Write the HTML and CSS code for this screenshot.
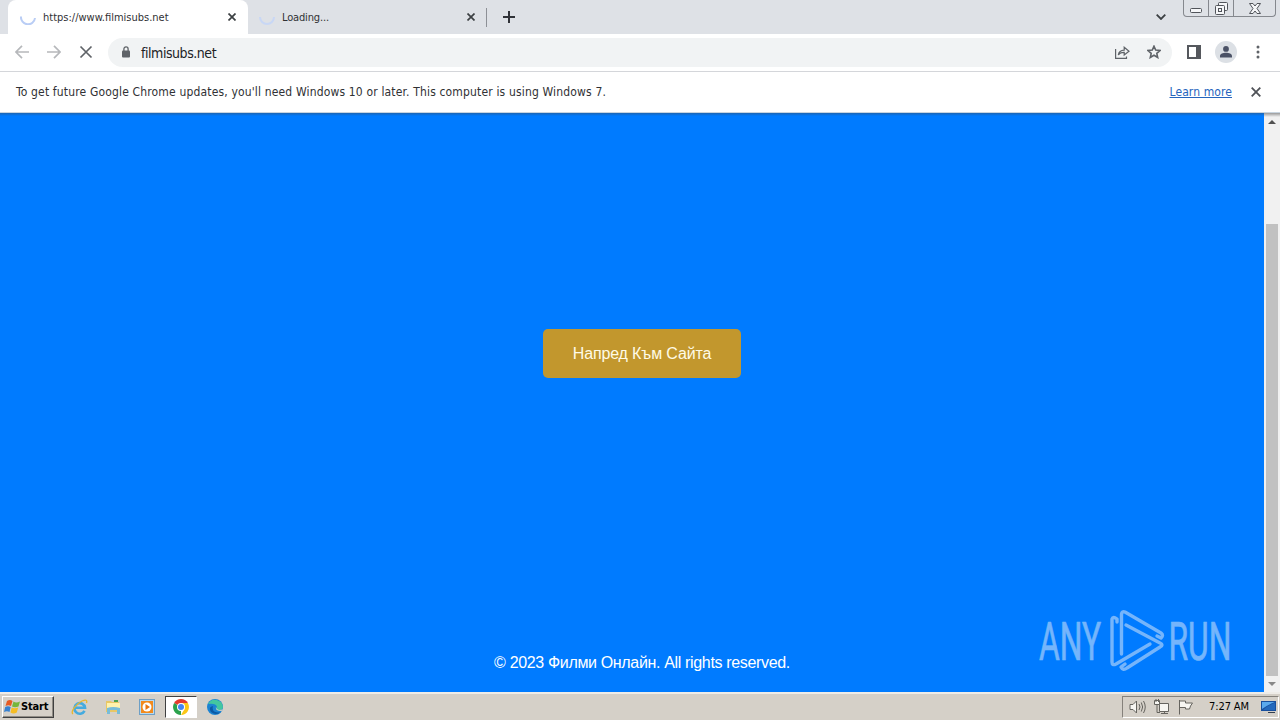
FILE: index.html
```
<!DOCTYPE html>
<html lang="en">
<head>
    <meta charset="UTF-8">
    <title>filmisubs.net</title>
    <link rel="stylesheet" href="styles.css">
</head>
<body>
    <div class="screen">
        <div class="tab-strip">
            <div class="tab active">
                <svg class="spinner" width="16" height="16" viewBox="0 0 16 16"><path d="M1 7.500A7 7 0 0 0 15 9"/></svg>
                <span class="tab-title first-title">https://www.filmisubs.net</span>
                <svg class="tab-close" width="8" height="8" viewBox="0 0 8 8"><path d="M.5 .5l7 7M7.500 .5l-7 7"/></svg>
            </div>
            <div class="tab">
                <svg class="spinner pale" width="16" height="16" viewBox="0 0 16 16"><path d="M1 8A7 7 0 0 0 15 8"/></svg>
                <span class="tab-title">Loading...</span>
                <svg class="tab-close" width="8" height="8" viewBox="0 0 8 8"><path d="M.5 .5l7 7M7.500 .5l-7 7"/></svg>
            </div>
            <span class="tab-divider"></span>
            <svg class="new-tab" width="12" height="12" viewBox="0 0 12 12"><path d="M6 0v12M0 6h12"/></svg>
            <svg class="tab-search" width="10" height="6" viewBox="0 0 10 6"><path d="M.7 .7L5 5L9.300 .7"/></svg>
            <div class="window-buttons">
                <span class="win-btn min"><svg width="12" height="5" viewBox="0 0 12 5"><rect x=".5" y=".5" width="11" height="4" rx="1"/></svg></span>
                <span class="win-btn max"><svg width="13" height="13" viewBox="0 0 13 13"><path d="M3.500 3.500V1.500Q3.500 .5 4.500 .5H11.500Q12.500 .5 12.500 1.500V7.500Q12.500 8.500 11.500 8.500H9.500"/><rect x=".5" y="3.500" width="9" height="9" rx="1"/><rect x="3.500" y="6.500" width="3" height="3"/></svg></span>
                <span class="win-btn close"><svg width="12" height="11" viewBox="0 0 12 11"><path d="M.5 .5H4L6 3L8 .5H11.500L8 5.500L11.500 10.500H8L6 8L4 10.500H.5L4 5.500Z"/></svg></span>
            </div>
        </div>

        <div class="toolbar">
            <svg class="nav-icon disabled" width="14" height="14" viewBox="0 0 14 14"><path d="M14 7H1M7 .8L.9 7L7 13.200"/></svg>
            <svg class="nav-icon disabled" width="14" height="14" viewBox="0 0 14 14"><path d="M0 7H13M7 .8L13.100 7L7 13.200"/></svg>
            <svg class="nav-icon" width="14" height="14" viewBox="0 0 14 14"><path d="M1.500 1.500l11 11M12.500 1.500l-11 11"/></svg>
            <div class="omnibox">
                <svg class="lock" width="8" height="12" viewBox="0 0 8 12"><rect y="4.500" width="8" height="7" rx="1"/><path d="M1.900 5V3a2.100 2.100 0 0 1 4.200 0V5"/></svg>
                <span class="url">filmisubs.net</span>
                <svg class="share" width="15" height="13" viewBox="0 0 15 13"><path d="M.6 3V12.400H11.500V10.500M3.300 9C3.800 5.800 6 4.200 9.200 4.100V1.200L14 5.200L9.200 9V6.400C6.500 6.300 4.700 7 3.300 9Z"/></svg>
                <svg class="star" width="14" height="14" viewBox="0 0 14 14"><path d="M7 1.200L8.700 5.100L13 5.500L9.800 8.300L10.700 12.500L7 10.300L3.300 12.500L4.200 8.300L1 5.500L5.300 5.100Z"/></svg>
            </div>
            <svg class="side-panel" width="14" height="14" viewBox="0 0 14 14"><path d="M0 0H14V14H0ZM2 2V12H9V2Z"/></svg>
            <svg class="avatar" width="22" height="22" viewBox="0 0 22 22"><circle cx="11" cy="11" r="11"/><path d="M11 5a2.900 2.900 0 0 1 0 5.800a2.900 2.900 0 0 1 0-5.800M5 16.500V15c0-2.200 3-3.300 6-3.300s6 1.100 6 3.300v1.500z"/></svg>
            <svg class="menu-dots" width="4" height="14" viewBox="0 0 4 14"><circle cx="2" cy="2" r="1.500"/><circle cx="2" cy="7" r="1.500"/><circle cx="2" cy="12" r="1.500"/></svg>
        </div>

        <div class="infobar">
            <span class="message">To get future Google Chrome updates, you'll need Windows 10 or later. This computer is using Windows 7.</span>
            <a class="learn-more">Learn more</a>
            <svg class="dismiss" width="10" height="10" viewBox="0 0 10 10"><path d="M.7 .7l8.600 8.600M9.300 .7L.7 9.300"/></svg>
        </div>

        <div class="viewport">
            <main class="page">
                <button class="enter">Напред Към Сайта</button>
                <footer>© 2023 Филми Онлайн. All rights reserved.</footer>
                <svg class="watermark" width="210" height="76" viewBox="1030 600 210 76">
                    <text transform="translate(1039 660) scale(.6 1)">ANY</text>
                    <text transform="translate(1168.500 660) scale(.6 1)">RUN</text>
                    <path d="M1117 622V619Q1113 616 1112 619V662Q1112 666 1116 664L1150 644M1121.500 654V614Q1122 611 1125 612L1161 633Q1164 635 1161 638L1157 636M1126 625L1160 643Q1164 645 1160 647L1127 668Q1123 671 1121 667L1125 664"/>
                </svg>
            </main>
            <div class="scrollbar">
                <span class="arrow up"></span>
                <span class="thumb"></span>
                <span class="arrow down"></span>
            </div>
        </div>

        <div class="taskbar">
            <div class="start">
                <svg width="17" height="16" viewBox="0 0 17 16">
                    <path fill="#e65a22" d="M3 2Q6 0 8.500 2L7 7Q4.500 5.500 1.500 7Z"/>
                    <path fill="#75b63b" d="M9.500 2.500Q12 4.500 16 2.500L14.500 7.500Q11 9 8 7.500Z"/>
                    <path fill="#3781d0" d="M1.200 8Q4 6.500 6.700 8L5.500 13Q3 11.500 0 13Z"/>
                    <path fill="#f5bd25" d="M7.700 8.500Q10.500 10 14.200 8.500L12.800 13.500Q9.500 15.500 6.500 13.500Z"/>
                </svg>
                <span>Start</span>
            </div>
            <div class="task">
                <svg width="17" height="17" viewBox="0 0 17 17"><path fill="none" stroke="#45abdf" stroke-width="2.600" d="M13.500 11.800A5.300 5.300 0 1 1 14 8.700H4"/><path fill="none" stroke="#e9b62c" stroke-width="1.300" d="M2 15C-1 13 5 5 11 2Q17-.5 15.500 4"/></svg>
            </div>
            <div class="task">
                <svg width="16" height="16" viewBox="0 0 16 16"><path fill="#e8c765" d="M1 2H6L7 3H14V13H1Z"/><path fill="#fff2ad" d="M2 4H15V10H2Z"/><path fill="#78bcd8" d="M2 9Q8 7 15 9V15H12V11H5V15H2Z"/><path fill="#4aa250" d="M9 1h4v2H9z"/></svg>
            </div>
            <div class="task">
                <svg width="16" height="16" viewBox="0 0 16 16"><rect x=".5" y=".5" width="15" height="15" fill="#b9daf0" stroke="#6d9fc6"/><rect x="2" y="2" width="12" height="12" fill="#f28a1d"/><circle cx="8" cy="8" r="4.500" fill="#fff"/><path fill="#e87510" d="M6.500 5L11 8L6.500 11Z"/></svg>
            </div>
            <div class="task pressed">
                <svg width="16" height="16" viewBox="0 0 16 16"><path fill="#e33b2e" d="M8 8L1.100 4A8 8 0 0 1 14.900 4Z"/><path fill="#2ba24c" d="M8 8V16A8 8 0 0 1 1.100 4Z"/><path fill="#fbc716" d="M8 4H14.900A8 8 0 0 1 8 16L11.500 10Z"/><circle cx="8" cy="8" r="4" fill="#fff"/><circle cx="8" cy="8" r="3" fill="#4285f4"/></svg>
            </div>
            <div class="task">
                <svg width="16" height="16" viewBox="0 0 16 16"><circle cx="8" cy="8" r="8" fill="#1b83d2"/><path fill="#43c6a0" d="M1 5A8 8 0 0 1 16 8Q15 12 10 11Q9 10 10 8Q9 4 1 5Z"/><path fill="#0c59a4" d="M6 7Q4 14 13.500 13.500A8 8 0 0 1 4 13Q1 8 6 7Z"/><path fill="#d6d2ca" d="M9 8Q8 12 14.500 12L16.500 10Q11 12 9.500 9.500Z"/></svg>
            </div>
            <div class="tray">
                <svg class="tray-icon" width="17" height="16" viewBox="0 0 17 16"><path class="speaker" d="M1 5.500H4L7.500 2V14L4 10.500H1Z"/><path d="M10 5Q12 8 10 11M12.300 3.500Q15 8 12.300 12.500M14.500 2Q18 8 14.500 14"/></svg>
                <svg class="tray-icon" width="16" height="16" viewBox="0 0 16 16"><path class="lit" d="M5.500 4.500H14.500V12.500H5.500Z"/><path d="M7 14.500H14M10.500 12.500V14.500"/><path class="lit" d="M.5 1.500H5.500V5.500H.5ZM2 0V3M4.500 0V3"/><path d="M3 5.500V13.500H6"/></svg>
                <svg class="tray-icon" width="16" height="16" viewBox="0 0 16 16"><path class="lit" d="M1.500 1V15.500M1.500 2H7.500V4H14.500L12.500 7L11.500 10H7.500V8.500H1.500"/></svg>
                <span class="clock">7:27 AM</span>
                <svg class="desktop" width="16" height="14" viewBox="0 0 16 14"><path fill="#184f9d" d="M0 1H15V11H0Z"/><path fill="#5aa9ed" d="M1 2H14Q8 4 1 9Z"/><path fill="#2369bd" d="M14 3V10H2Q7 5 14 3Z"/><path fill="#333f50" d="M7 12H14V13H7Z"/></svg>
            </div>
        </div>
    </div>
</body>
</html>
```
FILE: styles.css
```
:root {
    --frame: #dee1e6;
    --icon: #5f6368;
    --page-blue: #007bff;
    --taskbar: #d5d0c8;
}
* { box-sizing: border-box; }
body {
    margin: 0;
    overflow: hidden;
    font-family: "DejaVu Sans Condensed", "DejaVu Sans", Tahoma, sans-serif;
    font-stretch: condensed;
    font-size: 11px;
    color: #303134;
}
svg { display: block; flex-shrink: 0; fill: none; }
.screen { width: 1280px; height: 720px; display: flex; flex-direction: column; }

/* tabs */
.tab-strip { height: 34px; display: flex; align-items: center; background: var(--frame); padding-left: 8px; flex-shrink: 0; }
.tab { width: 238px; height: 34px; display: flex; align-items: center; padding: 0 11px; }
.tab.active { width: 240px; padding: 0 12px; background: #fff; border-radius: 8px 8px 0 0; }
.spinner { stroke: #b9cdf5; stroke-width: 2; margin-right: 7px; }
.spinner.pale { stroke: #c8d7f5; }
.tab-title { letter-spacing: -.15px; white-space: nowrap; }
.first-title { letter-spacing: 0; }
.tab-close { margin-left: auto; stroke: #3c4043; stroke-width: 1.7; }
.tab-divider { width: 1px; height: 19px; background: #8d9096; }
.new-tab { margin-left: 16px; stroke: #303238; stroke-width: 2; }
.tab-search { margin-left: auto; stroke: #3c4043; stroke-width: 1.8; }
.window-buttons {
    display: flex; align-self: flex-start; width: 93px; height: 17px; margin: 0 4px 0 17px;
    border: 1px solid #85888e; border-top: 0; border-radius: 0 0 4px 4px;
}
.win-btn { width: 25px; display: flex; align-items: center; justify-content: center; stroke: #51545a; fill: #f5f6f8; }
.win-btn svg { fill: inherit; }
.win-btn.min { padding-top: 4px; width: 24px; }
.win-btn.max { border-left: 1px solid #85888e; border-right: 1px solid #85888e; width: 26px; }
.win-btn.close { width: 41px; }

/* address row */
.toolbar { height: 38px; display: flex; align-items: center; padding: 0 20px 1px 15px; border-bottom: 1px solid #d4d6da; background: #fff; flex-shrink: 0; }
.nav-icon { stroke: #5f6368; stroke-width: 1.7; margin-right: 18px; }
.nav-icon.disabled { stroke: #b6b8bb; }
.omnibox { width: 1064px; height: 29px; margin-left: -3px; padding: 0 11px 0 14px; border-radius: 15px; background: #f1f3f4; display: flex; align-items: center; }
.lock { fill: var(--icon); }
.lock path { fill: none; stroke: var(--icon); stroke-width: 1.3; }
.url { margin: 1px 0 0 11px; font-size: 14px; letter-spacing: -.45px; color: #202124; }
.share { margin-left: auto; stroke: var(--icon); stroke-width: 1.2; }
.star { margin-left: 17px; stroke: var(--icon); stroke-width: 1.6; }
.side-panel { margin-left: 15px; fill: #55585d; fill-rule: evenodd; }
.avatar { margin-left: 14px; }
.avatar circle { fill: #dce0e5; }
.avatar path { fill: #4b5266; }
.menu-dots { margin-left: auto; fill: var(--icon); }

.infobar { height: 41px; display: flex; align-items: center; padding: 0 19px 0 16px; background: #fff; border-bottom: 1px solid #c8d4df; flex-shrink: 0; font-size: 12px; }
.message { white-space: nowrap; letter-spacing: .16px; }
.learn-more { margin-left: auto; color: #2564bd; text-decoration: underline; letter-spacing: .1px; }
.dismiss { margin-left: 19px; stroke: #4f5257; stroke-width: 1.8; }

/* web page */
.viewport { height: 579px; display: flex; flex-shrink: 0; background: var(--page-blue); }
.page {
    position: relative; width: 1264px; padding: 216px 0 0 20px;
    display: flex; flex-direction: column; align-items: center;
    background: linear-gradient(#1d65b2, var(--page-blue) 3px);
    font-family: "Liberation Sans", Arial, sans-serif; font-size: 16px; color: #fff;
}
.enter { width: 198px; height: 49px; border: 0; border-radius: 5px; background: #c2972d; color: #fffbe6; font: inherit; padding: 0; letter-spacing: -.14px; }
footer { margin-top: 276px; line-height: 18px; letter-spacing: -.34px; }
.watermark { position: absolute; left: 1030px; top: 487px; opacity: .55; stroke: #d5e5f8; stroke-width: 3.4; stroke-linejoin: round; stroke-linecap: round; overflow: visible; }
.watermark text { font: 53px Roboto, sans-serif; fill: #d5e5f8; stroke: #d5e5f8; stroke-width: .7; }
.scrollbar { width: 16px; background: linear-gradient(#999, #f1f1f1 4px); display: flex; flex-direction: column; align-items: center; padding: 7px 0 6px; }
.arrow { width: 0; height: 0; border: 4px solid transparent; }
.arrow.up { border-top: 0; border-bottom-color: #505050; }
.arrow.down { border-bottom: 0; border-top-color: #888; margin-top: auto; }
.thumb { width: 12px; height: 452px; background: #c1c1c1; margin-top: 100px; }

/* taskbar */
.taskbar { height: 28px; display: flex; align-items: center; background: var(--taskbar); border-top: 2px solid #eeece8; padding: 0 1px 0 2px; color: #000; }
.start { width: 52px; height: 22px; display: flex; align-items: center; gap: 1px; padding-left: 1px; margin-right: 9px; border: 1px solid; border-color: #fff #404040 #404040 #fff; box-shadow: inset -1px -1px #908c85; font-weight: bold; letter-spacing: -.15px; }
.start span { margin: -1px 0 0 -1px; }
.task { width: 32px; height: 22px; margin-right: 2px; display: flex; align-items: center; justify-content: center; }
.task.pressed { background: #fff; border: 1px solid; border-color: #404040 #fff #fff #404040; }
.tray { width: 157px; height: 22px; display: flex; align-items: center; margin-left: auto; padding: 0 1px 0 6px; border: 1px solid; border-color: #85817b #fff #fff #85817b; }
.tray-icon { stroke: #66645f; margin-right: 8px; }
.tray-icon .lit, .speaker { fill: #f7f6f2; }
.clock { margin: -1px 0 0 7px; letter-spacing: -.1px; white-space: nowrap; }
.desktop { margin-left: auto; }
```
